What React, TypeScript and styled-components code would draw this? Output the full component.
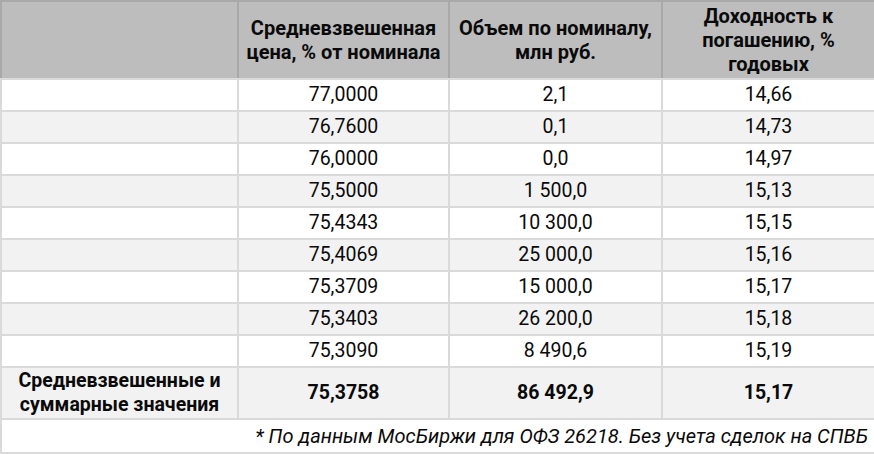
import React from 'react';
import styled, { createGlobalStyle } from 'styled-components';

const GlobalStyle = createGlobalStyle`
  html, body {
    margin: 0;
    padding: 0;
    background: #fff;
  }
  body {
    font-family: Roboto, "Liberation Sans", Arial, sans-serif;
    color: #0a0a0a;
  }
`;

const Table = styled.table`
  width: 874px;
  border-collapse: collapse;
  table-layout: fixed;
`;

const HeadCell = styled.th`
  background: #bdbdbd;
  border: 2px solid #a9a9a9;
  border-bottom-color: #dadada;
  height: 76px;
  padding: 0 6px;
  font-size: 20px;
  font-weight: 700;
  line-height: 24px;
  text-align: center;
  vertical-align: middle;
`;

const Row = styled.tr<{ $striped?: boolean }>`
  background: ${p => (p.$striped ? '#f2f2f2' : '#fff')};
`;

const Cell = styled.td<{ $bold?: boolean; $tall?: boolean }>`
  border: 2px solid #dadada;
  height: ${p => (p.$tall ? '50px' : '30px')};
  padding: 0 6px;
  font-size: 19.5px;
  font-weight: ${p => (p.$bold ? 700 : 400)};
  line-height: 24px;
  text-align: center;
  vertical-align: middle;
`;

const Note = styled.td`
  border: 2px solid #dadada;
  height: 32px;
  padding: 0 6px 0 0;
  font-size: 20px;
  font-style: italic;
  text-align: right;
  vertical-align: middle;
`;

const rows: [string, string, string][] = [
  ['77,0000', '2,1', '14,66'],
  ['76,7600', '0,1', '14,73'],
  ['76,0000', '0,0', '14,97'],
  ['75,5000', '1 500,0', '15,13'],
  ['75,4343', '10 300,0', '15,15'],
  ['75,4069', '25 000,0', '15,16'],
  ['75,3709', '15 000,0', '15,17'],
  ['75,3403', '26 200,0', '15,18'],
  ['75,3090', '8 490,6', '15,19'],
];

const App: React.FC = () => (
  <>
    <GlobalStyle />
    <Table>
      <colgroup>
        <col style={{ width: 237 }} />
        <col style={{ width: 211 }} />
        <col style={{ width: 213 }} />
        <col style={{ width: 213 }} />
      </colgroup>
      <thead>
        <tr>
          <HeadCell />
          <HeadCell>Средневзвешенная цена, % от номинала</HeadCell>
          <HeadCell>Объем по номиналу, млн руб.</HeadCell>
          <HeadCell>Доходность к погашению, % годовых</HeadCell>
        </tr>
      </thead>
      <tbody>
        {rows.map((r, i) => (
          <Row key={r[0]} $striped={i % 2 === 1}>
            <Cell />
            <Cell>{r[0]}</Cell>
            <Cell>{r[1]}</Cell>
            <Cell>{r[2]}</Cell>
          </Row>
        ))}
        <Row $striped>
          <Cell $bold $tall>Средневзвешенные и суммарные значения</Cell>
          <Cell $bold $tall>75,3758</Cell>
          <Cell $bold $tall>86 492,9</Cell>
          <Cell $bold $tall>15,17</Cell>
        </Row>
        <tr>
          <Note colSpan={4}>* По данным МосБиржи для ОФЗ 26218. Без учета сделок на СПВБ</Note>
        </tr>
      </tbody>
    </Table>
  </>
);

export default App;
